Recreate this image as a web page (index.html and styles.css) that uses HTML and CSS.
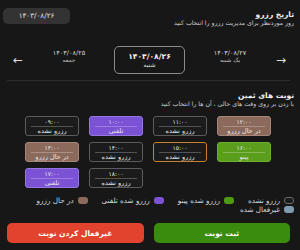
FILE: index.html
```html
<!DOCTYPE html>
<html lang="fa" dir="rtl">
<head>
<meta charset="utf-8">
<link rel="stylesheet" href="styles.css">
</head>
<body>
<div class="page">
  <header class="head">
    <div class="titles">
      <div class="title">تاریخ رزرو</div>
      <div class="sub">روز موردنظر برای مدیریت رزرو را انتخاب کنید</div>
    </div>
    <div class="badge">۱۴۰۳/۰۸/۲۶</div>
  </header>

  <div class="days">
    <span class="arrow">→</span>
    <div class="day"><div class="d">۱۴۰۳/۰۸/۲۷</div><div class="w">یک شنبه</div></div>
    <div class="day sel"><div class="d">۱۴۰۳/۰۸/۲۶</div><div class="w">شنبه</div></div>
    <div class="day"><div class="d">۱۴۰۳/۰۸/۲۵</div><div class="w">جمعه</div></div>
    <span class="arrow">←</span>
  </div>

  <div class="rule"></div>

  <section class="slots-sec">
    <div class="title">نوبت های ثمین</div>
    <div class="sub">با زدن بر روی وقت های خالی ، آن ها را انتخاب کنید</div>
    <div class="grid">
      <div class="slot"><span class="t">۰۹:۰۰</span><span class="l">رزرو نشده</span></div>
      <div class="slot purple"><span class="t">۱۰:۰۰</span><span class="l">تلفنی</span></div>
      <div class="slot"><span class="t">۱۱:۰۰</span><span class="l">رزرو نشده</span></div>
      <div class="slot brown"><span class="t">۱۲:۰۰</span><span class="l">در حال رزرو</span></div>
      <div class="slot brown"><span class="t">۱۳:۰۰</span><span class="l">در حال رزرو</span></div>
      <div class="slot"><span class="t">۱۴:۰۰</span><span class="l">رزرو نشده</span></div>
      <div class="slot orange"><span class="t">۱۵:۰۰</span><span class="l">رزرو نشده</span></div>
      <div class="slot green"><span class="t">۱۶:۰۰</span><span class="l">پینو</span></div>
      <div class="slot purple"><span class="t">۱۷:۰۰</span><span class="l">تلفنی</span></div>
      <div class="slot"><span class="t">۱۸:۰۰</span><span class="l">رزرو نشده</span></div>
    </div>
  </section>

  <div class="legend">
    <span class="item"><i class="sw sw-empty"></i>رزرو نشده</span>
    <span class="item"><i class="sw sw-green"></i>رزرو شده پینو</span>
    <span class="item"><i class="sw sw-purple"></i>رزرو شده تلفنی</span>
    <span class="item"><i class="sw sw-brown"></i>در حال رزرو</span>
    <span class="item"><i class="sw sw-grey"></i>غیرفعال شده</span>
  </div>

  <div class="actions">
    <button class="btn btn-ok">ثبت نوبت</button>
    <button class="btn btn-off">غیرفعال کردن نوبت</button>
  </div>
</div>
</body>
</html>
```

FILE: styles.css
```css
* { box-sizing: border-box; }
html, body {
  margin: 0;
  padding: 0;
  background: #171717;
  width: 300px;
  height: 250px;
  overflow: hidden;
}
body {
  font-family: "DejaVu Sans", sans-serif;
  color: #e6e6e6;
}
.page {
  padding: 8px 10px 0 7px;
}
.head {
  display: flex;
  justify-content: space-between;
  align-items: flex-start;
  margin-right: -4px;
  margin-left: -4px;
}
.titles { padding-top: 2px; }
.title {
  font-size: 7.5px;
  font-weight: bold;
  line-height: 9px;
  color: #f2f2f2;
}
.sub {
  font-size: 6.2px;
  line-height: 8px;
  color: #cfcfcf;
}
.badge {
  background: #333333;
  border-radius: 5px;
  width: 67px;
  height: 16px;
  font-size: 7.2px;
  line-height: 16px;
  text-align: center;
  color: #e0e0e0;
}
.days {
  display: flex;
  justify-content: space-between;
  align-items: flex-start;
  margin-top: 19px;
  height: 28px;
  padding: 0 3px 0 5px;
}
.arrow {
  font-size: 12px;
  line-height: 11px;
  margin-top: 9px;
  color: #dddddd;
  width: 12px;
  text-align: center;
}
.day {
  width: 62px;
  text-align: center;
  padding-top: 3px;
}
.day .d { font-size: 6.5px; line-height: 8px; color: #d8d8d8; }
.day .w { font-size: 5.8px; line-height: 7px; color: #bdbdbd; }
.day.sel {
  width: 71px;
  height: 28px;
  border: 1px solid #8a8a8a;
  border-radius: 5px;
  padding-top: 5px;
}
.day.sel .d { font-weight: bold; color: #f5f5f5; font-size: 7.6px; line-height: 9px; }
.day.sel .w { color: #e0e0e0; font-size: 6px; }
.rule {
  height: 1px;
  background: #2c2c2c;
  margin-top: 6px;
}
.slots-sec {
  margin-top: 10px;
  margin-right: -4px;
}
.grid {
  direction: ltr;
  display: grid;
  grid-template-columns: repeat(4, 54px);
  column-gap: 10px;
  row-gap: 6px;
  margin: 8px 0 0 18px;
}
.slot {
  height: 20px;
  border: 1px solid #5c5c5c;
  border-radius: 3px;
  background: #1b1b1b;
  display: flex;
  flex-direction: column;
  align-items: center;
  justify-content: center;
  color: #e8e8e8;
  direction: rtl;
}
.slot .t {
  font-size: 6px;
  line-height: 7px;
  width: 80%;
  text-align: center;
  border-bottom: 1px solid rgba(255,255,255,0.25);
  padding-bottom: 1px;
}
.slot .l {
  font-size: 6.5px;
  line-height: 8px;
}
.slot.purple { background: #7c52d4; border-color: #9576e0; }
.slot.brown { background: #8c6a5b; border-color: #a4877a; }
.slot.green { background: #5a9e1c; border-color: #6cb02e; }
.slot.orange { border-color: #c7812f; }
.legend {
  display: flex;
  flex-wrap: wrap;
  column-gap: 14px;
  row-gap: 0;
  margin-top: 8px;
  margin-right: -4px;
  font-size: 7.2px;
  line-height: 9px;
  color: #d6d6d6;
}
.item { display: inline-flex; align-items: center; gap: 4px; }
.sw {
  display: inline-block;
  width: 10px;
  height: 7px;
  border-radius: 3px;
}
.sw-empty { border: 1px solid #6a6a6a; background: #1b1b1b; }
.sw-green { background: #4e9a12; }
.sw-purple { background: #7c52d4; }
.sw-brown { background: #8c6a5b; }
.sw-grey { background: #7e9bb0; }
.actions {
  display: flex;
  gap: 10px;
  margin-top: 9px;
}
.btn {
  flex: 1;
  height: 20px;
  border: none;
  border-radius: 5px;
  color: #ffffff;
  font-family: "DejaVu Sans", sans-serif;
  font-size: 7.5px;
  font-weight: bold;
}
.btn-ok { background: #3a8c0c; }
.btn-off { background: #e2432f; }
```
